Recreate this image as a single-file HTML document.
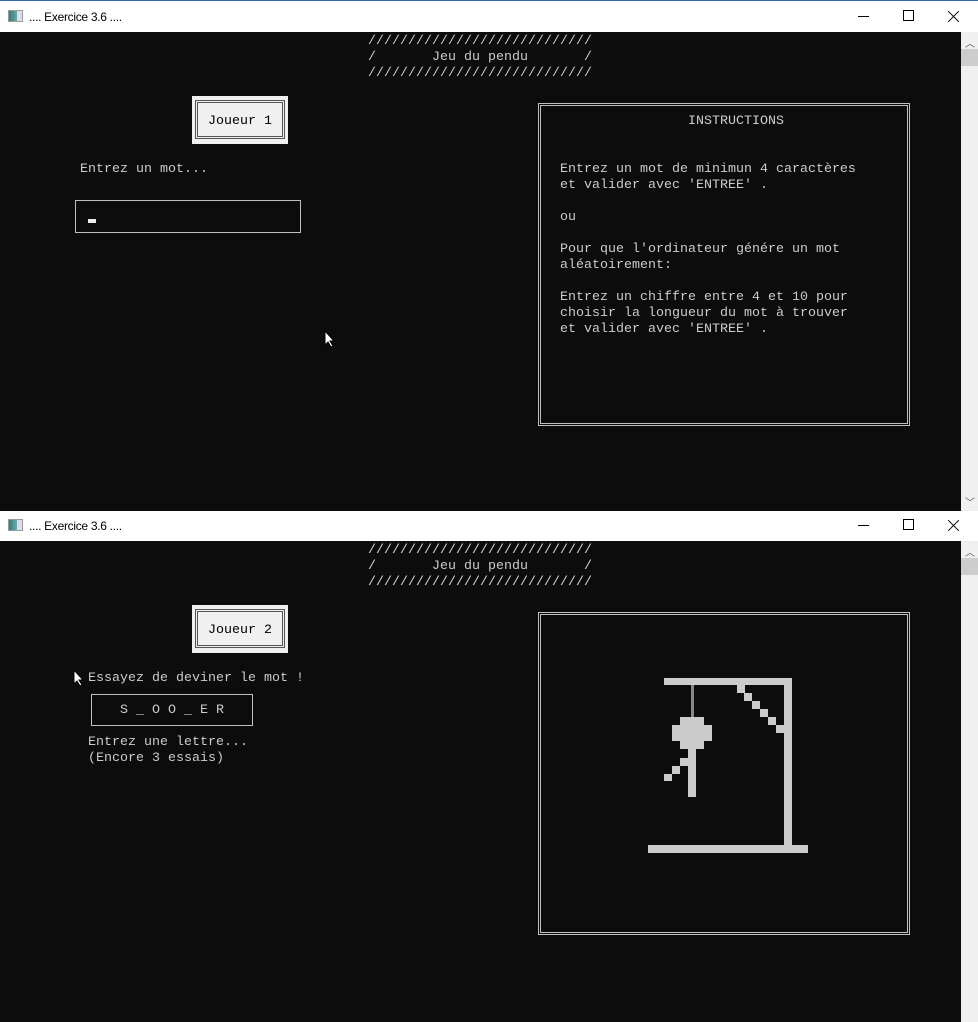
<!DOCTYPE html>
<html><head><meta charset="utf-8"><style>
*{margin:0;padding:0;box-sizing:border-box}
body{width:978px;height:1022px;background:#0c0c0c;position:relative;overflow:hidden;font-family:"Liberation Mono",monospace;}
.a{position:absolute}
.t{position:absolute;font-family:"Liberation Mono",monospace;font-size:13.33px;line-height:16px;color:#cccccc;white-space:pre;padding-top:2px}
.title{position:absolute;left:0;width:978px;background:#fff;font-family:"Liberation Sans",sans-serif;font-size:12px;color:#000;letter-spacing:-0.3px}
.title .ic{position:absolute;left:8px;width:15px;height:12px;background:linear-gradient(90deg,#3a7a78 0,#6aa 60%,#dde 60%);border:1px solid #999}
.title .tx{position:absolute;left:29px}
.sb{position:absolute;left:961px;width:17px;background:#f0f0f0}
.btn{position:absolute;background:#f0f0f0}
.btn div{position:absolute;left:3px;top:4px;right:3px;bottom:5px;border:3px double #555}
.btn span{position:absolute;left:16px;top:18px;font-size:13.33px;line-height:16px;color:#000;font-family:"Liberation Mono",monospace;white-space:pre}
.box{position:absolute;border:3px double #c0c0c0}
.g{position:absolute;background:#cccccc}
.x1,.x2{position:absolute;width:15px;height:1px;background:#000}
</style></head><body>
<div class="title" style="top:0;height:32px;border-top:1px solid #2b6ca8">
<div class="ic" style="top:9px"></div><div class="tx" style="top:9px">.... Exercice 3.6 ....</div>
<div class="a" style="left:858px;top:15px;width:11px;height:1px;background:#000"></div>
<div class="a" style="left:903px;top:9px;width:11px;height:11px;border:1px solid #000"></div>
<div class="x1" style="left:946px;top:15px;transform:rotate(45deg)"></div><div class="x2" style="left:946px;top:15px;transform:rotate(-45deg)"></div>
</div>
<div class="sb" style="top:32px;height:479px">
<div class="a" style="left:4px;top:3px;font-size:10px;color:#555">︿</div>
<div class="a" style="left:0;top:17px;width:17px;height:17px;background:#cdcdcd"></div>
<div class="a" style="left:4px;top:462px;font-size:10px;color:#555">﹀</div>
</div>
<div class="t" style="left:368px;top:32px">////////////////////////////
/       Jeu du pendu       /
////////////////////////////</div>
<div class="btn" style="left:192px;top:96px;width:96px;height:48px"><div></div><span>Joueur 1</span></div>
<div class="t" style="left:80px;top:160px">Entrez un mot...</div>
<div class="a" style="left:75px;top:200px;width:226px;height:33px;border:1px solid #c0c0c0"></div>
<div class="a" style="left:88px;top:219px;width:8px;height:4px;background:#eee"></div>
<div class="box" style="left:538px;top:103px;width:372px;height:323px"></div>
<div class="t" style="left:688px;top:112px">INSTRUCTIONS</div>
<div class="t" style="left:560px;top:160px">Entrez un mot de minimun 4 caractères
et valider avec 'ENTREE' .

ou

Pour que l'ordinateur génére un mot
aléatoirement:

Entrez un chiffre entre 4 et 10 pour
choisir la longueur du mot à trouver
et valider avec 'ENTREE' .</div>
<svg class="a" style="left:324px;top:330px" width="12" height="18"><path d="M1 1 L1 15 L4 12 L7 17 L9 16 L6 11 L10 11 Z" fill="#fff" stroke="#000" stroke-width="1"/></svg>

<div class="title" style="top:511px;height:30px">
<div class="ic" style="top:8px"></div><div class="tx" style="top:8px">.... Exercice 3.6 ....</div>
<div class="a" style="left:858px;top:14px;width:11px;height:1px;background:#000"></div>
<div class="a" style="left:903px;top:8px;width:11px;height:11px;border:1px solid #000"></div>
<div class="x1" style="left:946px;top:14px;transform:rotate(45deg)"></div><div class="x2" style="left:946px;top:14px;transform:rotate(-45deg)"></div>
</div>
<div class="sb" style="top:541px;height:481px">
<div class="a" style="left:4px;top:3px;font-size:10px;color:#555">︿</div>
<div class="a" style="left:0;top:17px;width:17px;height:17px;background:#cdcdcd"></div>
</div>
<div class="t" style="left:368px;top:541px">////////////////////////////
/       Jeu du pendu       /
////////////////////////////</div>
<div class="btn" style="left:192px;top:605px;width:96px;height:48px"><div></div><span>Joueur 2</span></div>
<div class="t" style="left:88px;top:669px">Essayez de deviner le mot !</div>
<div class="a" style="left:91px;top:694px;width:162px;height:32px;border:1px solid #c0c0c0"></div>
<div class="t" style="left:120px;top:701px">S _ O O _ E R</div>
<div class="t" style="left:88px;top:733px">Entrez une lettre...
(Encore 3 essais)</div>
<svg class="a" style="left:73px;top:669px" width="12" height="18"><path d="M1 1 L1 15 L4 12 L7 17 L9 16 L6 11 L10 11 Z" fill="#fff" stroke="#000" stroke-width="1"/></svg>
<div class="box" style="left:538px;top:612px;width:372px;height:323px"></div>
<div class="g" style="left:664px;top:678px;width:128px;height:7px"></div>
<div class="g" style="left:784px;top:678px;width:8px;height:170px"></div>
<div class="g" style="left:648px;top:845px;width:160px;height:8px"></div>
<div class="a" style="left:691px;top:685px;width:3px;height:32px;background:#888"></div>
<div class="g" style="left:680px;top:717px;width:24px;height:8px"></div>
<div class="g" style="left:672px;top:725px;width:40px;height:16px"></div>
<div class="g" style="left:680px;top:741px;width:24px;height:8px"></div>
<div class="g" style="left:688px;top:749px;width:8px;height:48px"></div>
<div class="g" style="left:680px;top:758px;width:8px;height:8px"></div>
<div class="g" style="left:672px;top:766px;width:8px;height:8px"></div>
<div class="g" style="left:664px;top:774px;width:8px;height:7px"></div>
<div class="g" style="left:737px;top:685px;width:8px;height:8px"></div>
<div class="g" style="left:744px;top:693px;width:8px;height:8px"></div>
<div class="g" style="left:752px;top:701px;width:8px;height:8px"></div>
<div class="g" style="left:760px;top:709px;width:8px;height:8px"></div>
<div class="g" style="left:768px;top:717px;width:8px;height:8px"></div>
<div class="g" style="left:776px;top:725px;width:8px;height:8px"></div>
</body></html>
